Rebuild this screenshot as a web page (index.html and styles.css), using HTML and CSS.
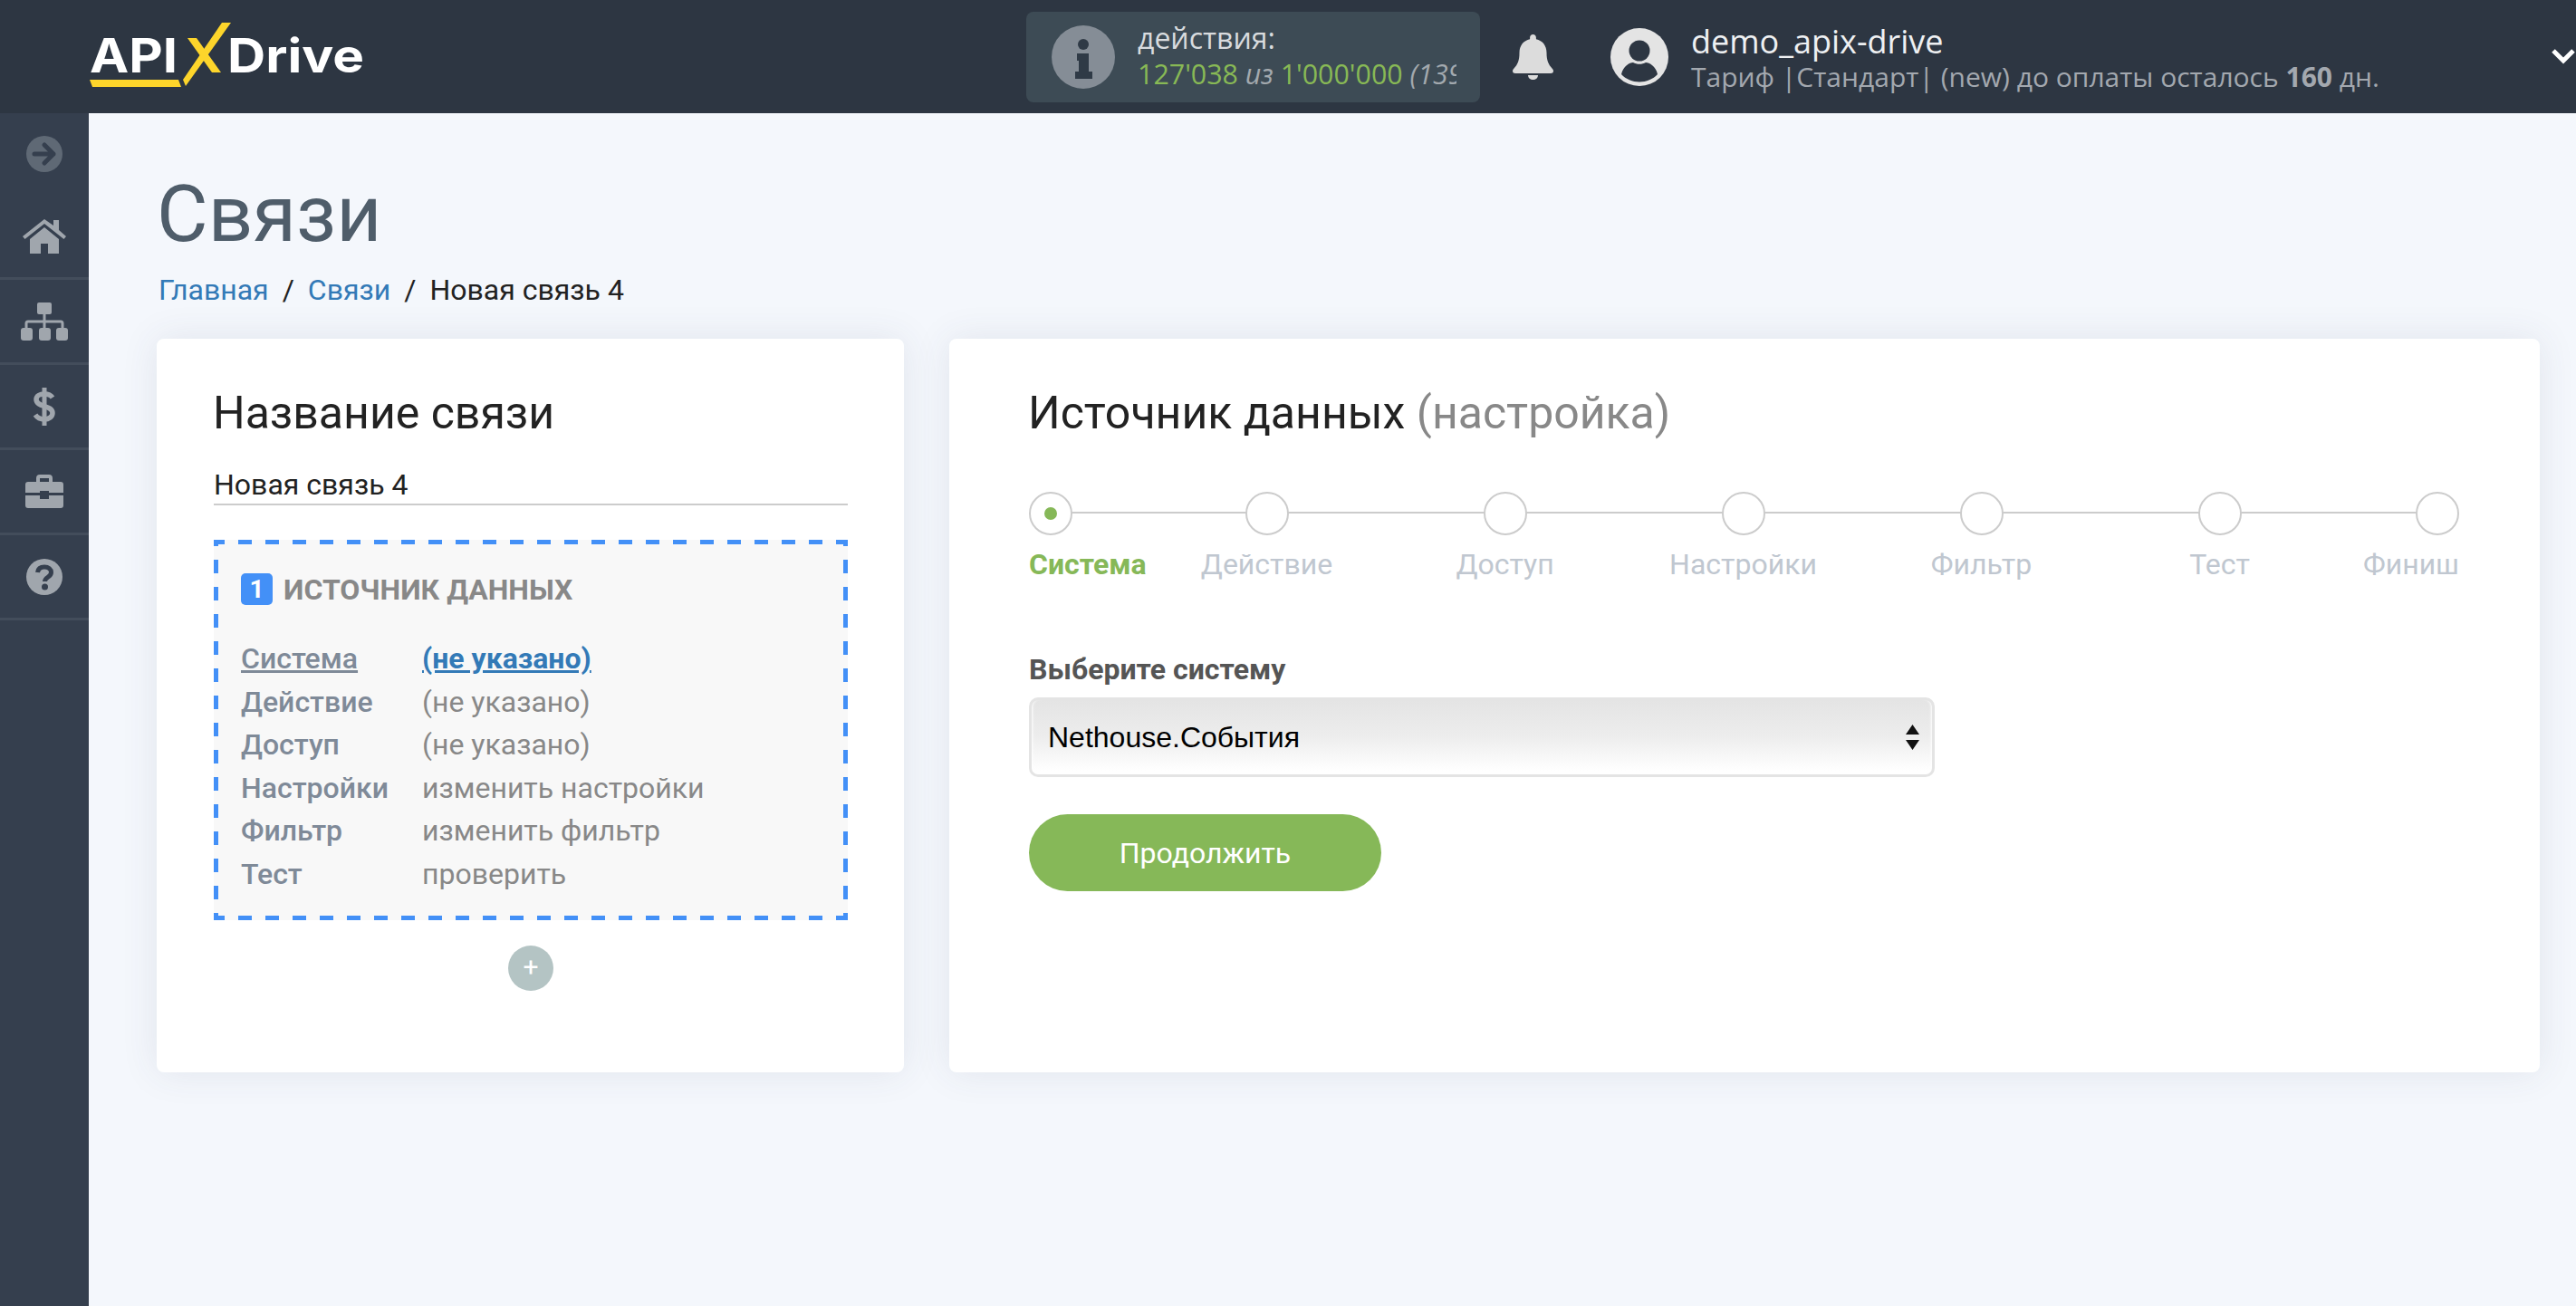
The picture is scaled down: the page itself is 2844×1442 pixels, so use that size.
FILE: index.html
```html
<!DOCTYPE html>
<html lang="ru">
<head>
<meta charset="utf-8">
<title>Связи</title>
<link rel="stylesheet" href="styles.css">
</head>
<body>
<header class="topbar">
  <svg class="logo" viewBox="0 0 310 80" width="310" height="80">
    <text class="logo-text" x="0" y="56" textLength="97" lengthAdjust="spacingAndGlyphs">API</text>
    <text class="logo-text" x="152" y="56" textLength="151" lengthAdjust="spacingAndGlyphs">Drive</text>
    <polygon class="logo-y" points="0,64 98,64 101,72 3,72"/>
    <polygon class="logo-y" points="146,1 156,1 106,71 103,64"/>
    <polygon class="logo-y" points="108,18 118,18 145,56 135,56"/>
  </svg>
  <div class="stats">
    <span class="stats-icon">
      <svg viewBox="0 0 70 70" width="70" height="70">
        <circle cx="35" cy="35" r="35" fill="#858d96"/>
        <circle cx="35" cy="21" r="6" fill="#2f3a46"/>
        <path d="M28 31h13v20h4v8H26v-8h4V39h-2z" fill="#2f3a46"/>
      </svg>
    </span>
    <div class="stats-text">
      <div class="stats-title">действия:</div>
      <div class="stats-line"><b>127'038</b> <i>из</i> <b>1'000'000</b> <i>(139</i></div>
    </div>
  </div>
  <svg class="bell" viewBox="0 0 45 50" width="45" height="50">
    <path d="M22.5 0c2 0 3.4 1.500 3.400 3.500v1.800C33 6.800 37.500 12.500 37.500 20c0 9 2 13 6 17.500 1 1.200 1.500 2 1.500 3 0 1.700-1.300 2.500-3 2.500H3c-1.700 0-3-.8-3-2.500 0-1 .5-1.800 1.500-3C5.500 33 7.500 29 7.500 20c0-7.500 4.500-13.200 11.600-14.700V3.500C19.100 1.500 20.500 0 22.500 0z" fill="#dcdcdc"/>
    <path d="M17 45h11c0 3-2.500 5-5.500 5S17 48 17 45z" fill="#dcdcdc"/>
  </svg>
  <svg class="avatar" viewBox="0 0 64 64" width="64" height="64">
    <circle cx="32" cy="32" r="32" fill="#e4e4e4"/>
    <circle cx="32" cy="25" r="11.500" fill="#2d3642"/>
    <path d="M12 51c2-9 9-13 13-13 2 1 4.500 1.800 7 1.800s5-.8 7-1.800c4 0 11 4 13 13-5 5.500-12.500 8.500-20 8.500s-15-3-20-8.500z" fill="#2d3642"/>
  </svg>
  <div class="user">
    <div class="user-name">demo_apix-drive</div>
    <div class="user-plan">Тариф |Стандарт| (new) до оплаты осталось <b>160</b> дн.</div>
  </div>
  <svg class="chevron" viewBox="0 0 28 20" width="28" height="20">
    <path d="M3 4l11 11L25 4" fill="none" stroke="#fff" stroke-width="5"/>
  </svg>
</header>
<div class="layout">
  <nav class="sidebar">
    <div class="side-item side-toggle">
      <svg viewBox="0 0 40 40" width="40" height="40">
        <circle cx="20" cy="20" r="20" fill="#5f6975"/>
        <path d="M9 20h21M20 10l10 10-10 10" fill="none" stroke="#353f4e" stroke-width="5" stroke-linecap="round" stroke-linejoin="round"/>
      </svg>
    </div>
    <div class="side-item">
      <svg viewBox="0 0 48 38" width="48" height="38">
        <path d="M24 0L34 7V1h6v11l8 7-2.500 3L24 5 2.500 22 0 19z" fill="#a0a6ad"/>
        <path d="M24 9l16 13v16H28V27h-8v11H8V22z" fill="#a0a6ad"/>
      </svg>
    </div>
    <div class="side-item">
      <svg viewBox="0 0 52 42" width="52" height="42">
        <rect x="18" y="0" width="16" height="13" rx="2" fill="#a0a6ad"/>
        <path d="M26 13v15M6 28v-5q0-2 2-2h36q2 0 2 2v5" fill="none" stroke="#a0a6ad" stroke-width="3"/>
        <rect x="0" y="28" width="13" height="14" rx="3" fill="#a0a6ad"/>
        <rect x="20" y="28" width="13" height="14" rx="3" fill="#a0a6ad"/>
        <rect x="39" y="28" width="13" height="14" rx="3" fill="#a0a6ad"/>
      </svg>
    </div>
    <div class="side-item">
      <svg viewBox="0 0 26 42" width="26" height="42">
        <path d="M13 0v42" stroke="#a0a6ad" stroke-width="5"/>
        <path d="M22 11c-2-3-5-4-9-4-5 0-9 2-9 6 0 9 18 6 18 15 0 4-4 7-9 7-4 0-8-2-10-5" fill="none" stroke="#a0a6ad" stroke-width="5.500"/>
      </svg>
    </div>
    <div class="side-item">
      <svg viewBox="0 0 42 37" width="42" height="37">
        <path d="M12 8V4q0-4 4-4h10q4 0 4 4v4h-4V4H16v4z" fill="#a0a6ad"/>
        <path d="M3 8h36q3 0 3 3v9H26v-2h-10v2H0v-9q0-3 3-3z" fill="#a0a6ad"/>
        <path d="M0 23h16v4h10v-4h16v11q0 3-3 3H3q-3 0-3-3z" fill="#a0a6ad"/>
      </svg>
    </div>
    <div class="side-item">
      <svg viewBox="0 0 40 40" width="40" height="40">
        <circle cx="20" cy="20" r="20" fill="#a0a6ad"/>
        <path d="M12.500 15c.5-4 3.500-6 7.500-6 4.500 0 7.500 2.500 7.500 6 0 5.500-7 5-7 10" fill="none" stroke="#353f4e" stroke-width="5"/>
        <circle cx="20.500" cy="31" r="3.500" fill="#353f4e"/>
      </svg>
    </div>
  </nav>
  <main class="content">
    <h1 class="page-title">Связи</h1>
    <div class="crumbs">
      <a class="crumb-link">Главная</a><span class="crumb-sep">/</span><a class="crumb-link">Связи</a><span class="crumb-sep">/</span><span>Новая связь 4</span>
    </div>
    <div class="cards">
      <section class="card card-left">
        <h2 class="card-title">Название связи</h2>
        <div class="name-input">Новая связь 4</div>
        <div class="source-box">
          <div class="source-head"><span class="badge">1</span><span class="source-name">ИСТОЧНИК ДАННЫХ</span></div>
          <div class="rows">
            <span class="row-label row-active">Система</span><span class="row-link">(не указано)</span>
            <span class="row-label">Действие</span><span class="row-val">(не указано)</span>
            <span class="row-label">Доступ</span><span class="row-val">(не указано)</span>
            <span class="row-label">Настройки</span><span class="row-val">изменить настройки</span>
            <span class="row-label">Фильтр</span><span class="row-val">изменить фильтр</span>
            <span class="row-label">Тест</span><span class="row-val">проверить</span>
          </div>
        </div>
        <div class="add-row"><span class="add-btn">+</span></div>
      </section>
      <section class="card card-right">
        <h2 class="card-title">Источник данных <span class="muted">(настройка)</span></h2>
        <div class="steps">
          <div class="step step-first step-current"><span class="dot"></span><span class="step-label">Система</span></div>
          <div class="step"><span class="dot"></span><span class="step-label">Действие</span></div>
          <div class="step"><span class="dot"></span><span class="step-label">Доступ</span></div>
          <div class="step"><span class="dot"></span><span class="step-label">Настройки</span></div>
          <div class="step"><span class="dot"></span><span class="step-label">Фильтр</span></div>
          <div class="step"><span class="dot"></span><span class="step-label">Тест</span></div>
          <div class="step step-last"><span class="dot"></span><span class="step-label">Финиш</span></div>
        </div>
        <div class="field-label">Выберите систему</div>
        <div class="select">
          <span>Nethouse.События</span>
          <svg class="select-arrows" viewBox="0 0 15 28" width="15" height="28">
            <path d="M7.500 0L15 11H0zM0 17h15L7.500 28z" fill="#111"/>
          </svg>
        </div>
        <button class="continue">Продолжить</button>
      </section>
    </div>
  </main>
</div>
</body>
</html>
```
FILE: styles.css
```css
* { box-sizing: border-box; }
html, body { margin: 0; height: 100%; overflow: hidden; }
body { font-family: Roboto, "Liberation Sans", sans-serif; background: #f4f7fc; color: #222; width: 2844px; height: 1442px; }

.topbar { height: 125px; background: #2d3642; display: flex; align-items: center; position: relative; overflow: hidden; font-family: "Open Sans", sans-serif; }
.logo { margin-left: 99px; margin-top: 3px; flex: none; }
.logo-text { font-family: Inter, sans-serif; font-weight: 700; font-size: 52px; fill: #fff; }
.logo-y { fill: #fdd52b; }
.stats { margin-left: 724px; width: 501px; height: 100px; background: #3d4b55; border-radius: 8px; display: flex; align-items: center; padding-left: 28px; flex: none; }
.stats-icon { display: block; width: 70px; height: 70px; flex: none; }
.stats-text { margin-left: 25px; width: 352px; overflow-x: clip; white-space: nowrap; }
.stats-title { font-size: 32px; line-height: 38px; color: #d8dbde; }
.stats-line { font-size: 30.400px; line-height: 41px; color: #a3a9ae; }
.stats-line b { font-weight: 400; color: #88b955; }
.bell { margin-left: 36px; flex: none; }
.avatar { margin-left: 63px; flex: none; }
.user { margin-left: 25px; white-space: nowrap; flex: none; padding-top: 2px; }
.user-name { font-size: 36px; line-height: 43px; color: #eef0f2; }
.user-plan { font-size: 30px; line-height: 36px; color: #a3a8af; }
.chevron { position: absolute; left: 2816px; top: 52px; }

.layout { display: flex; height: 1317px; }
.sidebar { width: 98px; background: #353f4e; flex: none; }
.side-item { height: 94px; display: flex; align-items: center; justify-content: center; border-bottom: 3px solid #434d5b; }
.side-toggle { border-bottom: 0; height: 90px; }

.content { flex: 1; padding: 61px 0 0 75px; }
.page-title { margin: 0; font-weight: 400; font-size: 87px; line-height: 100px; color: #4f5d6a; }
.crumbs { margin: 14px 0 0 2px; font-size: 32px; line-height: 40px; color: #222; }
.crumb-link { color: #337ab7; }
.crumb-sep { margin: 0 15px; }

.cards { display: flex; gap: 50px; margin-top: 34px; align-items: stretch; }
.card { height: 810px; background: #fff; border-radius: 8px; box-shadow: 0 0 40px rgba(60, 70, 100, .1); }
.card-left { width: 825px; padding: 52px 62px 0 63px; }
.card-right { width: 1756px; padding: 52px 89px 0 88px; }
.card-title { margin: 0 0 0 -1px; font-weight: 400; font-size: 50px; line-height: 60px; color: #222; }
.muted { color: #888; }

.name-input { margin-top: 28px; height: 44px; font-size: 32px; line-height: 42px; border-bottom: 2px solid #ccc; color: #222; }
.source-box { margin-top: 38px; height: 420px; padding: 37px 30px 0; background-color: #f8f8f8;
  background-image: linear-gradient(90deg, #4390f7 50%, transparent 0), linear-gradient(90deg, #4390f7 50%, transparent 0), linear-gradient(180deg, #4390f7 50%, transparent 0), linear-gradient(180deg, #4390f7 50%, transparent 0);
  background-size: 30px 5px, 30px 5px, 5px 30px, 5px 30px;
  background-position: 27px 0, 27px 100%, 0 22px, 100% 22px;
  background-repeat: repeat-x, repeat-x, repeat-y, repeat-y; }
.source-head { display: flex; align-items: center; height: 35px; }
.badge { width: 35px; height: 35px; border-radius: 5px; background: #4390f7; color: #fff; font-weight: 700; font-size: 28px; line-height: 35px; text-align: center; }
.source-name { margin-left: 12px; font-size: 32px; font-weight: 700; color: #888; }
.rows { margin-top: 36px; display: grid; grid-template-columns: 200px 1fr; grid-auto-rows: 47.500px; font-size: 32px; line-height: 47.500px; }
.row-label { font-weight: 500; color: #7f8a98; }
.row-active { text-decoration: underline; }
.row-val { color: #888; }
.row-link { color: #337ab7; font-weight: 700; text-decoration: underline; }
.add-row { margin-top: 28px; display: flex; justify-content: center; }
.add-btn { width: 50px; height: 50px; border-radius: 50%; background: #b4c4c4; color: #fff; font-size: 30px; line-height: 48px; text-align: center; }

.steps { position: relative; margin-top: 57px; display: grid; grid-template-columns: 131px repeat(5, 263px) 133px; }
.steps::before { content: ""; position: absolute; left: 24px; right: 24px; top: 22px; height: 2px; background: #ccc; }
.step { position: relative; display: flex; flex-direction: column; align-items: center; }
.step-first { align-items: flex-start; }
.step-last { align-items: flex-end; }
.dot { width: 48px; height: 48px; border-radius: 50%; border: 2px solid #ccc; background: #fff; display: flex; align-items: center; justify-content: center; }
.step-current .dot::after { content: ""; width: 14px; height: 14px; border-radius: 50%; background: #86b858; }
.step-label { margin-top: 11px; font-size: 32px; line-height: 42px; color: #c0c7d0; white-space: nowrap; }
.step-current .step-label { color: #86b858; font-weight: 700; }

.field-label { margin-top: 75px; font-size: 32px; font-weight: 700; line-height: 40px; color: #555; }
.select { position: relative; margin-top: 11px; width: 1000px; height: 88px; border: 3px solid #e4e4e4; border-radius: 10px; background: linear-gradient(#e4e4e4, #ededed 50%, #fff 95%); box-shadow: inset 3px 0 3px -2px #fff, inset -3px 0 3px -2px #fff; padding-left: 18px; display: flex; align-items: center; font-family: "Liberation Sans", sans-serif; font-size: 32px; color: #000; }
.select-arrows { position: absolute; right: 14px; top: 27px; }
.continue { display: block; margin-top: 41px; width: 389px; height: 85px; border: 0; border-radius: 43px; background: #86b858; color: #fff; font-family: Roboto, sans-serif; font-size: 32px; }
```
